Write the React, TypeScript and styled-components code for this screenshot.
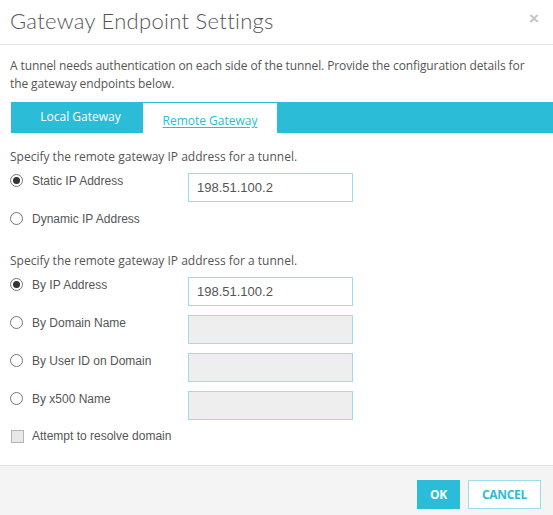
import React, { useState } from "react";
import styled, { createGlobalStyle } from "styled-components";

const teal = "#2bbcd8";
const text = "#555";

const GlobalStyle = createGlobalStyle`
  html, body {
    margin: 0;
    padding: 0;
    background: #fff;
  }
  * {
    box-sizing: border-box;
  }
`;

const Dialog = styled.div`
  width: 553px;
  height: 515px;
  display: flex;
  flex-direction: column;
  background: #fff;
  font-family: "Open Sans", sans-serif;
  color: ${text};
  overflow: hidden;
`;

const Header = styled.div`
  height: 45px;
  border-bottom: 1px solid #e5e5e5;
  display: flex;
  align-items: center;
  justify-content: space-between;
  padding: 0 14px 3px 10px;
`;

const Title = styled.h1`
  margin: 0;
  font-family: "Lato", sans-serif;
  font-weight: 300;
  font-size: 22px;
  letter-spacing: 0.3px;
  color: #555;
`;

const Close = styled.span`
  font-family: "Liberation Sans", Arial, sans-serif;
  font-weight: bold;
  font-size: 17px;
  color: #c4c4c4;
  line-height: 1;
  margin-top: -4px;
`;

const Body = styled.div`
  flex: 1;
  padding: 12px 0 0 10px;
`;

const Intro = styled.p`
  margin: 0;
  max-width: 530px;
  font-size: 12px;
  line-height: 18px;
  letter-spacing: -0.1px;
`;

const Tabs = styled.div`
  margin-top: 9px;
  margin-left: 1px;
  height: 31px;
  background: ${teal};
  display: flex;
`;

const Tab = styled.button<{ $active?: boolean }>`
  border: none;
  margin: 0;
  font-family: "Open Sans", sans-serif;
  font-size: 12px;
  cursor: pointer;
  width: ${(p) => (p.$active ? "135px" : "131px")};
  background: ${(p) => (p.$active ? "#fff" : "transparent")};
  color: ${(p) => (p.$active ? teal : "#fff")};
  text-decoration: ${(p) => (p.$active ? "underline" : "none")};
  text-underline-offset: 2px;
  border-top: ${(p) => (p.$active ? `1px solid ${teal}` : "none")};
  border-left: ${(p) => (p.$active ? `1px solid ${teal}` : "none")};
  padding: ${(p) => (p.$active ? "4px 0 0 0" : "0 0 2px 8px")};
`;

const Section = styled.div`
  margin-top: 17px;
`;

const Caption = styled.div`
  font-size: 12px;
  line-height: 14px;
  margin-bottom: 9px;
`;

const Rows = styled.div`
  display: grid;
  grid-template-columns: 178px 165px;
  grid-auto-rows: 29px;
  row-gap: 9px;
`;

const RadioLabel = styled.label`
  grid-column: 1;
  display: flex;
  align-items: center;
  gap: 9px;
  height: 15px;
  font-family: "Liberation Sans", Arial, sans-serif;
  font-size: 12px;
  cursor: pointer;
`;

const RadioDot = styled.span<{ $checked: boolean }>`
  width: 13px;
  height: 13px;
  border-radius: 50%;
  border: 1px solid #777;
  background: #fff;
  display: flex;
  align-items: center;
  justify-content: center;
  &::after {
    content: "";
    width: 7px;
    height: 7px;
    border-radius: 50%;
    background: ${(p) => (p.$checked ? "#333" : "transparent")};
  }
`;

const Field = styled.input<{ $disabled?: boolean }>`
  grid-column: 2;
  width: 165px;
  height: 29px;
  border: 1px solid #9ddcea;
  background: ${(p) => (p.$disabled ? "#eeeeee" : "#fff")};
  padding: 0 8px;
  font-family: "Liberation Sans", Arial, sans-serif;
  font-size: 13px;
  color: #555;
  outline: none;
`;

const CheckRow = styled.label`
  margin-top: 9px;
  display: flex;
  align-items: center;
  gap: 8px;
  font-family: "Liberation Sans", Arial, sans-serif;
  font-size: 12px;
  height: 14px;
  padding-left: 1px;
`;

const Box = styled.span`
  width: 13px;
  height: 13px;
  background: #e8e8e8;
  border: 1px solid #b4b4b4;
`;

const Footer = styled.div`
  height: 50px;
  border-top: 1px solid #e2e2e2;
  background: #f4f4f4;
  display: flex;
  justify-content: flex-end;
  align-items: flex-start;
  gap: 8px;
  padding: 14px 12px 0 0;
`;

const Button = styled.button<{ $primary?: boolean }>`
  height: 29px;
  padding: 0;
  width: ${(p) => (p.$primary ? "43px" : "73px")};
  font-family: "Open Sans", sans-serif;
  font-weight: 700;
  font-size: 12px;
  letter-spacing: -0.3px;
  background: ${(p) => (p.$primary ? teal : "#fff")};
  color: ${(p) => (p.$primary ? "#fff" : teal)};
  border: 1px solid ${(p) => (p.$primary ? teal : "#9ddcea")};
  cursor: pointer;
`;

type Row = { label: string; value?: string; field: boolean };

const typeRows: Row[] = [
  { label: "Static IP Address", value: "198.51.100.2", field: true },
  { label: "Dynamic IP Address", field: false },
];

const idRows: Row[] = [
  { label: "By IP Address", value: "198.51.100.2", field: true },
  { label: "By Domain Name", field: true },
  { label: "By User ID on Domain", field: true },
  { label: "By x500 Name", field: true },
];

function RadioGroup({ rows, selected, onSelect }: { rows: Row[]; selected: number; onSelect: (i: number) => void }) {
  return (
    <Rows>
      {rows.map((r, i) => (
        <React.Fragment key={r.label}>
          <RadioLabel style={{ gridRow: i + 1 }} onClick={() => onSelect(i)}>
            <RadioDot $checked={selected === i} />
            {r.label}
          </RadioLabel>
          {r.field ? (
            <Field
              style={{ gridRow: i + 1 }}
              defaultValue={r.value ?? ""}
              $disabled={!r.value}
              readOnly={!r.value}
            />
          ) : null}
        </React.Fragment>
      ))}
    </Rows>
  );
}

export default function App() {
  const [type, setType] = useState(0);
  const [id, setId] = useState(0);
  return (
    <>
      <GlobalStyle />
      <Dialog>
        <Header>
          <Title>Gateway Endpoint Settings</Title>
          <Close>×</Close>
        </Header>
        <Body>
          <Intro>
            A tunnel needs authentication on each side of the tunnel. Provide the configuration details for the
            gateway endpoints below.
          </Intro>
          <Tabs>
            <Tab>Local Gateway</Tab>
            <Tab $active>Remote Gateway</Tab>
          </Tabs>
          <Section>
            <Caption>Specify the remote gateway IP address for a tunnel.</Caption>
            <RadioGroup rows={typeRows} selected={type} onSelect={setType} />
          </Section>
          <Section style={{ marginTop: 14 }}>
            <Caption>Specify the remote gateway IP address for a tunnel.</Caption>
            <RadioGroup rows={idRows} selected={id} onSelect={setId} />
            <CheckRow>
              <Box />
              Attempt to resolve domain
            </CheckRow>
          </Section>
        </Body>
        <Footer>
          <Button $primary>OK</Button>
          <Button>CANCEL</Button>
        </Footer>
      </Dialog>
    </>
  );
}
